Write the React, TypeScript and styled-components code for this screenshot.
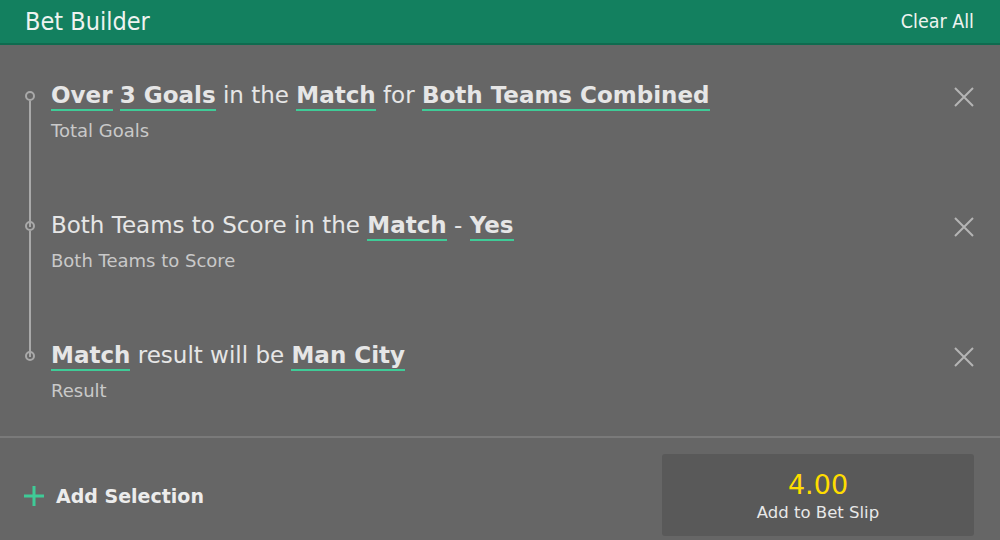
import React from 'react';
import styled, { createGlobalStyle } from 'styled-components';

type Part = { text: string; key?: boolean };
type Leg = { id: number; parts: Part[]; market: string };

const legs: Leg[] = [
  {
    id: 1,
    parts: [
      { text: 'Over', key: true }, { text: ' ' }, { text: '3 Goals', key: true },
      { text: ' in the ' }, { text: 'Match', key: true }, { text: ' for ' },
      { text: 'Both Teams Combined', key: true },
    ],
    market: 'Total Goals',
  },
  {
    id: 2,
    parts: [
      { text: 'Both Teams to Score in the ' }, { text: 'Match', key: true },
      { text: ' - ' }, { text: 'Yes', key: true },
    ],
    market: 'Both Teams to Score',
  },
  {
    id: 3,
    parts: [
      { text: 'Match', key: true }, { text: ' result will be ' },
      { text: 'Man City', key: true },
    ],
    market: 'Result',
  },
];

const Global = createGlobalStyle`
  html, body { margin: 0; padding: 0; background: #666; }
  body { font-family: "DejaVu Sans", Verdana, sans-serif; }
`;

const Panel = styled.div`
  width: 1000px;
  height: 540px;
  background: #666666;
  display: flex;
  flex-direction: column;
  overflow: hidden;
`;

const Header = styled.header`
  height: 43px;
  background: #13805f;
  border-bottom: 2px solid #0f6b4f;
  display: flex;
  align-items: center;
  justify-content: space-between;
  padding: 0 26px 0 25px;
  color: #eef3f0;
`;

const Title = styled.h1`
  margin: 0;
  font-family: "DejaVu Sans Condensed", "DejaVu Sans", sans-serif;
  font-weight: normal;
  font-size: 25px;
`;

const ClearAll = styled.button`
  background: none;
  border: 0;
  padding: 0;
  color: #eef3f0;
  font-family: "DejaVu Sans Condensed", "DejaVu Sans", sans-serif;
  font-size: 19.5px;
`;

const List = styled.ol`
  list-style: none;
  margin: 0;
  padding: 0;
  flex: 1;
  border-bottom: 2px solid #7a7a7a;
`;

const Item = styled.li<{ $last: boolean }>`
  position: relative;
  display: grid;
  grid-template-columns: 1fr 40px;
  height: 130px;
  padding: 35px 16px 0 51px;
  box-sizing: border-box;

  &::before {
    content: '';
    position: absolute;
    left: 25px;
    top: 46px;
    width: 6px;
    height: 6px;
    border: 2px solid #a9a9a9;
    border-radius: 50%;
  }

  &::after {
    content: '';
    display: ${p => (p.$last ? 'none' : 'block')};
    position: absolute;
    left: 29px;
    top: 56px;
    width: 2px;
    height: 126px;
    background: #a9a9a9;
  }
`;

const Desc = styled.div`
  font-size: 23px;
  line-height: 30px;
  color: #e6e6e6;
  white-space: pre;
`;

const Key = styled.span`
  font-weight: bold;
  border-bottom: 2px solid #3fcb97;
  padding-bottom: 1px;
`;

const Market = styled.div`
  margin-top: 10px;
  font-size: 18px;
  line-height: 21px;
  color: #c9c9c9;
`;

const Remove = styled.button`
  background: none;
  border: 0;
  padding: 0;
  width: 24px;
  height: 24px;
  margin-top: 5px;
  justify-self: end;
  margin-right: 8px;
  color: #b5b5b5;
`;

const Footer = styled.footer`
  display: flex;
  align-items: center;
  justify-content: space-between;
  padding: 16px 26px 4px 24px;
`;

const AddSelection = styled.button`
  background: none;
  border: 0;
  padding: 0;
  display: flex;
  align-items: center;
  gap: 12px;
  color: #ececec;
  font-family: "DejaVu Sans", sans-serif;
  font-weight: bold;
  font-size: 19px;
  margin-top: 2px;
`;

const SlipButton = styled.button`
  width: 312px;
  height: 82px;
  background: #595959;
  border: 0;
  border-radius: 3px;
  display: flex;
  flex-direction: column;
  align-items: center;
  justify-content: center;
  gap: 2px;
  font-family: "DejaVu Sans", sans-serif;
`;

const Odds = styled.span`
  color: #ffdd00;
  font-size: 27px;
  line-height: 32px;
`;

const SlipLabel = styled.span`
  color: #e8e8e8;
  font-size: 16.5px;
`;

const CloseIcon = () => (
  <svg width="24" height="24" viewBox="0 0 24 24" fill="none" stroke="currentColor" strokeWidth="2">
    <path d="M3 3L21 21M21 3L3 21" />
  </svg>
);

const PlusIcon = () => (
  <svg width="20" height="20" viewBox="0 0 20 20" fill="none" stroke="#3fcb97" strokeWidth="3">
    <path d="M10 0V20M0 10H20" />
  </svg>
);

export default function App() {
  return (
    <Panel>
      <Global />
      <Header>
        <Title>Bet Builder</Title>
        <ClearAll>Clear All</ClearAll>
      </Header>
      <List>
        {legs.map((leg, i) => (
          <Item key={leg.id} $last={i === legs.length - 1}>
            <div>
              <Desc>
                {leg.parts.map((p, j) => (p.key ? <Key key={j}>{p.text}</Key> : <span key={j}>{p.text}</span>))}
              </Desc>
              <Market>{leg.market}</Market>
            </div>
            <Remove aria-label="Remove"><CloseIcon /></Remove>
          </Item>
        ))}
      </List>
      <Footer>
        <AddSelection><PlusIcon />Add Selection</AddSelection>
        <SlipButton>
          <Odds>4.00</Odds>
          <SlipLabel>Add to Bet Slip</SlipLabel>
        </SlipButton>
      </Footer>
    </Panel>
  );
}
